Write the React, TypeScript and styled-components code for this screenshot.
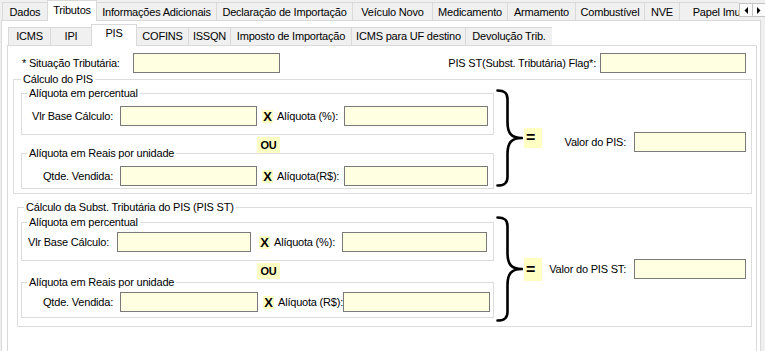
import React from 'react';
import styled, { createGlobalStyle } from 'styled-components';

const GlobalStyle = createGlobalStyle`
  html, body {
    margin: 0;
    padding: 0;
  }
  body {
    background: #f0f0f0;
    font-family: "Liberation Sans", Arial, sans-serif;
    font-size: 11px;
    letter-spacing: -0.2px;
    color: #000;
    overflow: hidden;
  }
  * {
    box-sizing: border-box;
  }
`;

const INPUT_BG = '#ffffe1';
const MARK_BG = '#ffffc4';

const Window = styled.div`
  width: 765px;
  height: 351px;
  overflow: hidden;
  background: #f0f0f0;
`;

const TabStrip = styled.div<{ $inner?: boolean }>`
  position: relative;
  z-index: 1;
  display: flex;
  height: ${({ $inner }) => ($inner ? 25 : 21)}px;
  padding-left: ${({ $inner }) => ($inner ? 1 : 2)}px;
`;

const TabList = styled.div<{ $w?: number }>`
  display: flex;
  align-items: flex-end;
  overflow: hidden;
  min-width: 0;
  flex: ${({ $w }) => ($w ? `0 0 ${$w}px` : 'none')};
`;

const Tab = styled.div<{ $w: number; $active?: boolean; $inner?: boolean }>`
  position: relative;
  z-index: ${({ $active }) => ($active ? 1 : 0)};
  flex: none;
  width: ${({ $w }) => $w + 1}px;
  margin-right: -1px;
  height: ${({ $active, $inner }) => ($active ? ($inner ? 22 : 21) : 18)}px;
  margin-bottom: ${({ $active }) => ($active ? 0 : 1)}px;
  padding-top: ${({ $inner }) => ($inner ? 2 : 3)}px;
  line-height: 13px;
  text-align: center;
  white-space: nowrap;
  overflow: hidden;
  border: 1px solid #d9d9d9;
  border-bottom: none;
  background: ${({ $active }) => ($active ? '#ffffff' : '#f0f0f0')};
`;

const ScrollButtons = styled.div`
  flex: none;
  display: flex;
  margin-top: 3px;
  height: 14px;
`;

const ScrollButton = styled.div`
  flex: none;
  width: 14px;
  height: 14px;
  margin-right: -1px;
  display: flex;
  align-items: center;
  justify-content: center;
  border: 1px solid #c4c4c4;
  background: #fcfcfc;
`;

const TabPage = styled.div<{ $w: number; $ml: number; $pl?: number }>`
  margin-top: -1px;
  margin-left: ${({ $ml }) => $ml}px;
  width: ${({ $w }) => $w}px;
  height: 340px;
  padding-left: ${({ $pl }) => $pl ?? 0}px;
  border: 1px solid #d9d9d9;
  background: #ffffff;
`;

const InnerControl = styled.div``;

const HeaderRow = styled.div`
  display: flex;
  justify-content: space-between;
  align-items: center;
  height: 20px;
  margin-top: 7px;
  padding: 0 10px 0 14px;
`;

const HeaderField = styled.div`
  display: flex;
  align-items: center;
`;

const Label = styled.span<{ $w?: number; $right?: boolean; $mr?: number; $ml?: number }>`
  flex: none;
  width: ${({ $w }) => ($w ? `${$w}px` : 'auto')};
  margin: 0 ${({ $mr }) => $mr ?? 0}px 0 ${({ $ml }) => $ml ?? 0}px;
  text-align: ${({ $right }) => ($right ? 'right' : 'left')};
  white-space: nowrap;
  line-height: 13px;
`;

const TextBox = styled.input<{ $w: number; $ml?: number }>`
  flex: none;
  width: ${({ $w }) => $w}px;
  height: 20px;
  margin: 0 0 0 ${({ $ml }) => $ml ?? 0}px;
  padding: 0 2px;
  border: 1px solid #7a7a7a;
  border-radius: 0;
  background: ${INPUT_BG};
  font: inherit;
  outline: none;
`;

const GroupBox = styled.fieldset<{ $ml: number; $mt: number; $w: number; $pt: number; $pl: number; $pb: number }>`
  min-width: 0;
  margin: ${({ $mt }) => $mt}px 0 0 ${({ $ml }) => $ml}px;
  width: ${({ $w }) => $w}px;
  padding: ${({ $pt }) => $pt}px 0 ${({ $pb }) => $pb}px ${({ $pl }) => $pl}px;
  border: 1px solid #dcdcdc;
`;

const Title = styled.legend<{ $ml: number }>`
  margin-left: ${({ $ml }) => $ml}px;
  padding: 0 2px;
  line-height: 13px;
  white-space: nowrap;
`;

const GroupBody = styled.div`
  display: flex;
`;

const Column = styled.div`
  display: flex;
  flex-direction: column;
  flex: none;
`;

const SubGroup = styled.fieldset<{ $pt: number; $pb: number }>`
  min-width: 0;
  margin: 0;
  width: 473px;
  padding: ${({ $pt }) => $pt}px 0 ${({ $pb }) => $pb}px 0;
  border: 1px solid #dcdcdc;
`;

const FieldRow = styled.div`
  display: flex;
  align-items: center;
  height: 20px;
`;

const Times = styled.span<{ $ml: number }>`
  flex: none;
  width: 11px;
  height: 13px;
  margin-left: ${({ $ml }) => $ml}px;
  line-height: 13px;
  text-align: center;
  font-size: 13px;
  font-weight: bold;
  letter-spacing: 0;
  background: ${MARK_BG};
`;

const Or = styled.div<{ $mb: number }>`
  width: 23px;
  height: 16px;
  margin: 2px 0 ${({ $mb }) => $mb}px 236px;
  line-height: 16px;
  text-align: center;
  font-weight: bold;
  background: ${MARK_BG};
`;

const BraceSvg = styled.svg`
  flex: none;
  align-self: center;
  margin-left: 2px;
  display: block;
`;

const Equals = styled.div<{ $h: number }>`
  flex: none;
  align-self: center;
  width: 18px;
  height: ${({ $h }) => $h}px;
  margin-left: 1px;
  padding-left: 2px;
  line-height: ${({ $h }) => $h}px;
  font-size: 16px;
  font-weight: bold;
  letter-spacing: 0;
  background: ${MARK_BG};
`;

const ResultArea = styled.div<{ $pt: number }>`
  flex: 1;
  display: flex;
  justify-content: flex-end;
  align-items: center;
  padding: ${({ $pt }) => $pt}px 5px 0 0;
`;

type RowLayout = {
  lw: number;
  ml1: number;
  w1: number;
  xml: number;
  lw2: number;
  w2: number;
};

const CalcRow: React.FC<{ label: string; label2: string; l: RowLayout }> = ({ label, label2, l }) => (
  <FieldRow>
    <Label $w={l.lw} $right>
      {label}
    </Label>
    <TextBox readOnly $w={l.w1} $ml={l.ml1} />
    <Times $ml={l.xml}>X</Times>
    <Label $w={l.lw2} $ml={4}>
      {label2}
    </Label>
    <TextBox readOnly $w={l.w2} $ml={4} />
  </FieldRow>
);

const Brace: React.FC<{ h: number }> = ({ h }) => {
  const m = h / 2;
  const d = `M1.5 1.5 C8 1.5 11.5 3.5 11.5 10 L11.5 ${m - 16} C11.5 ${m - 5} 15 ${m} 26 ${m} C15 ${m} 11.5 ${m + 5} 11.5 ${m + 16} L11.5 ${h - 10} C11.5 ${h - 3.5} 8 ${h - 1.5} 1.5 ${h - 1.5}`;
  return (
    <BraceSvg width={27} height={h} viewBox={`0 0 27 ${h}`}>
      <path d={d} fill="none" stroke="#000" strokeWidth={2.6} strokeLinecap="round" strokeLinejoin="round" />
    </BraceSvg>
  );
};

const Arrow: React.FC<{ dir: 'left' | 'right' }> = ({ dir }) => (
  <svg width="4" height="7" viewBox="0 0 4 7">
    <polygon points={dir === 'left' ? '4,0 4,7 0.5,3.5' : '0,0 0,7 3.5,3.5'} fill="#000" />
  </svg>
);

const outerTabs = [
  { label: 'Dados', w: 45 },
  { label: 'Tributos', w: 49, active: true },
  { label: 'Informações Adicionais', w: 120 },
  { label: 'Declaração de Importação', w: 136 },
  { label: 'Veículo Novo', w: 80 },
  { label: 'Medicamento', w: 75 },
  { label: 'Armamento', w: 68 },
  { label: 'Combustível', w: 69 },
  { label: 'NVE', w: 35 },
  { label: 'Papel Imune', w: 86 },
];

const innerTabs = [
  { label: 'ICMS', w: 42 },
  { label: 'IPI', w: 41 },
  { label: 'PIS', w: 45, active: true },
  { label: 'COFINS', w: 52 },
  { label: 'ISSQN', w: 42 },
  { label: 'Imposto de Importação', w: 121 },
  { label: 'ICMS para UF destino', w: 114 },
  { label: 'Devolução Trib.', w: 87 },
];

const rowA: RowLayout = { lw: 91, ml1: 7, w1: 137, xml: 5, lw2: 63, w2: 144 };
const rowB: RowLayout = { lw: 87, ml1: 8, w1: 134, xml: 8, lw2: 64, w2: 145 };
const rowC: RowLayout = { lw: 91, ml1: 7, w1: 138, xml: 5, lw2: 61, w2: 147 };

const App: React.FC = () => (
  <Window>
    <GlobalStyle />
    <TabStrip>
      <TabList $w={737}>
        {outerTabs.map((t) => (
          <Tab key={t.label} $w={t.w} $active={t.active}>
            {t.label}
          </Tab>
        ))}
      </TabList>
      <ScrollButtons>
        <ScrollButton>
          <Arrow dir="left" />
        </ScrollButton>
        <ScrollButton>
          <Arrow dir="right" />
        </ScrollButton>
      </ScrollButtons>
    </TabStrip>
    <TabPage $w={760} $ml={1} $pl={5}>
      <InnerControl>
        <TabStrip $inner>
          <TabList>
            {innerTabs.map((t) => (
              <Tab key={t.label} $w={t.w} $active={t.active} $inner>
                {t.label}
              </Tab>
            ))}
          </TabList>
        </TabStrip>
        <TabPage $w={750} $ml={0}>
          <HeaderRow>
            <HeaderField>
              <Label $w={111}>* Situação Tributária:</Label>
              <TextBox readOnly $w={147} />
            </HeaderField>
            <HeaderField>
              <Label $mr={4}>PIS ST(Subst. Tributária) Flag*:</Label>
              <TextBox readOnly $w={146} />
            </HeaderField>
          </HeaderRow>

          <GroupBox $ml={5} $mt={0} $w={739} $pt={1} $pl={7} $pb={4}>
            <Title $ml={0}>Cálculo do PIS</Title>
            <GroupBody>
              <Column>
                <SubGroup $pt={6} $pb={8}>
                  <Title $ml={5}>Alíquota em percentual</Title>
                  <CalcRow label="Vlr Base Cálculo:" label2="Alíquota (%):" l={rowA} />
                </SubGroup>
                <Or $mb={-6}>OU</Or>
                <SubGroup $pt={6} $pb={2}>
                  <Title $ml={5}>Alíquota em Reais por unidade</Title>
                  <CalcRow label="Qtde. Vendida:" label2="Alíquota(R$):" l={rowA} />
                </SubGroup>
              </Column>
              <Brace h={98} />
              <Equals $h={20}>=</Equals>
              <ResultArea $pt={8}>
                <Label $mr={8}>Valor do PIS:</Label>
                <TextBox readOnly $w={112} />
              </ResultArea>
            </GroupBody>
          </GroupBox>

          <GroupBox $ml={9} $mt={7} $w={735} $pt={2} $pl={3} $pb={4}>
            <Title $ml={3}>Cálculo da Subst. Tributária do PIS (PIS ST)</Title>
            <GroupBody>
              <Column>
                <SubGroup $pt={3} $pb={8}>
                  <Title $ml={5}>Alíquota em percentual</Title>
                  <CalcRow label="Vlr Base Cálculo:" label2="Alíquota (%):" l={rowB} />
                </SubGroup>
                <Or $mb={-3}>OU</Or>
                <SubGroup $pt={3} $pb={5}>
                  <Title $ml={5}>Alíquota em Reais por unidade</Title>
                  <CalcRow label="Qtde. Vendida:" label2="Alíquota (R$):" l={rowC} />
                </SubGroup>
              </Column>
              <Brace h={106} />
              <Equals $h={23}>=</Equals>
              <ResultArea $pt={0}>
                <Label $mr={8}>Valor do PIS ST:</Label>
                <TextBox readOnly $w={112} />
              </ResultArea>
            </GroupBody>
          </GroupBox>
        </TabPage>
      </InnerControl>
    </TabPage>
  </Window>
);

export default App;
